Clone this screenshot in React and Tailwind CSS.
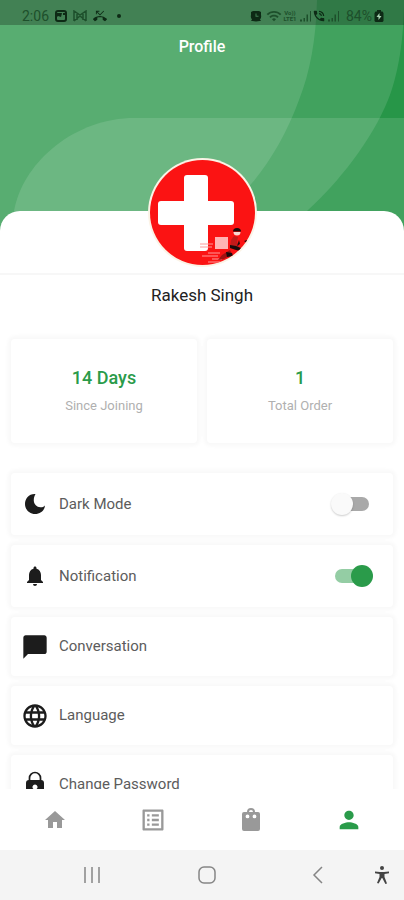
import React, { useState } from "react";
import {
  MdChatBubble,
  MdHome,
  MdLanguage,
  MdListAlt,
  MdNotifications,
  MdPerson,
  MdPhoneInTalk,
  MdPhoneMissed,
  MdWifi,
} from "react-icons/md";

const stats = [
  { value: "14 Days", label: "Since Joining" },
  { value: "1", label: "Total Order" },
];

const MoonIcon = ({ className }) => (
  <svg viewBox="0 0 24 24" fill="currentColor" className={className}>
    <path d="M11.500 2C5.800 2 2 6.600 2 12s4.400 10 10 10 9.600-3.600 10-8.600c-1.200 1.300-2.900 2-4.700 1.900-3.500-.2-6.300-3-6.500-6.500C10.700 6.300 11.300 4 12.500 2Z" />
  </svg>
);

const LockIcon = ({ className }) => (
  <svg viewBox="0 0 24 28" fill="currentColor" className={className}>
    <path d="M6.500 10V7a5.500 5.500 0 0 1 11 0v3" fill="none" stroke="currentColor" strokeWidth="1.700" />
    <path
      fillRule="evenodd"
      d="M6 9h12a3 3 0 0 1 3 3v10a3 3 0 0 1-3 3H6a3 3 0 0 1-3-3V12a3 3 0 0 1 3-3Zm6 4.500a2.500 2.500 0 0 0-1.500 4.500L10 21h4l-.5-3a2.500 2.500 0 0 0-1.500-4.500Z"
    />
  </svg>
);

const BagIcon = ({ className }) => (
  <svg viewBox="0 0 22 26" fill="currentColor" className={className}>
    <path
      fillRule="evenodd"
      d="M4 5h3a4 4 0 0 1 8 0h3a2 2 0 0 1 2 2v15a2 2 0 0 1-2 2H4a2 2 0 0 1-2-2V7a2 2 0 0 1 2-2Zm5 0h4a2 2 0 0 0-4 0ZM7.500 7.500a1.900 1.900 0 1 0 .01 3.800A1.900 1.900 0 0 0 7.500 7.500Zm7 0a1.900 1.900 0 1 0 .01 3.800A1.900 1.900 0 0 0 14.500 7.500Z"
    />
  </svg>
);

const AlarmIcon = ({ className }) => (
  <svg viewBox="0 0 12 12" fill="currentColor" className={className}>
    <path fillRule="evenodd" d="M3 1h6l2 1v3a5 5 0 0 1-1 4.500L11 11H9.500L6 11.500 2.500 11H1l1-1.500A5 5 0 0 1 1 5V2ZM5.500 3.500v3.300H8.500v-1h-2V3.500Z" />
  </svg>
);

const BatteryIcon = ({ className }) => (
  <svg viewBox="0 0 10 12" fill="currentColor" className={className}>
    <path d="M3 0h4v1.500h1.500L9.500 3v8l-1 1h-7l-1-1V3l1-1.500H3Z" />
    <path d="M5.500 3 2.500 7h2v3l3-4h-2Z" fill="#a9d3b4" />
  </svg>
);

const links = [
  { label: "Conversation", Icon: MdChatBubble },
  { label: "Language", Icon: MdLanguage },
  { label: "Change Password", Icon: LockIcon, iconClass: "h-7 w-6" },
];

const Signal = () => (
  <svg viewBox="0 0 12 12" fill="currentColor" className="size-3">
    <path d="M0 9.500h2v2H0zM3.500 8h1.500v3.500H3.500zM6.500 4.500H8v7H6.500zM10 1h1v10.500h-1z" />
  </svg>
);

// =========================================
// STATUS BAR
// =========================================
const StatusBar = () => (
  <div className="relative flex h-[25px] items-center justify-between bg-black/25 pt-1.5 pr-5 pl-[22px] text-[#1d4f2b]">
    <div className="flex items-center gap-1.5 text-sm">
      <span>2:06</span>
      <svg viewBox="0 0 12 12" className="size-3 text-[#0d2a15]">
        <rect x="1" y="1" width="10" height="10" rx="2" fill="none" stroke="currentColor" strokeWidth="2" />
        <path d="M1 3h6l-1 4-3-1-2 2zM8 3h2v2H8z" fill="currentColor" />
      </svg>
      <svg viewBox="0 0 14 12" className="h-3 w-3.5" fill="none" stroke="currentColor" strokeWidth="1.500">
        <path d="M1 11V1l6 4 6-4v10M1 11l6-5 6 5M4 4v6M10 4v6" />
      </svg>
      <MdPhoneMissed className="size-3.5 text-[#0d2a15]" />
      <span className="ml-1 size-1 rounded-full bg-[#0d2a15]" />
    </div>
    <div className="flex items-center text-sm">
      <AlarmIcon className="mr-1 size-3 text-[#0d2a15]" />
      <MdWifi className="size-4" />
      <span className="mr-0.5 flex w-4 flex-col items-center text-[6px] leading-[6px] font-bold">
        <span>Vo))</span>
        <span>LTE1</span>
      </span>
      <Signal />
      <MdPhoneInTalk className="mr-0.5 size-3.5 text-[#0d2a15]" />
      <Signal />
      <span className="ml-1.5">84%</span>
      <BatteryIcon className="ml-0.5 h-3 w-2.5 text-[#0d2a15]" />
    </div>
  </div>
);

// =========================================
// AVATAR
// =========================================
const Avatar = () => (
  <svg viewBox="0 0 109 109" className="size-[109px]" role="img" aria-label="Rakesh Singh">
    <defs>
      <clipPath id="avatar">
        <circle cx="54.500" cy="54.500" r="52.500" />
      </clipPath>
    </defs>
    <circle cx="54.500" cy="54.500" r="54.500" fill="#fbf3e6" />
    <g clipPath="url(#avatar)">
      <rect width="109" height="109" fill="#fb1313" />
      <rect x="36" y="17" width="24" height="76" rx="3" fill="#fff" />
      <rect x="10" y="43" width="76" height="24" rx="3" fill="#fff" />
      <rect x="67" y="79" width="13" height="12" fill="#ffb3b3" />
      <path d="M52 86h13M52 89h12M60 95h12M54 98h16M64 101h10M60 104h12" stroke="#ff9a9a" />
      <path d="M83 82l3-4 4 1-1 5 2 4-5 3-4-2z" fill="#c21a1a" />
      <path d="M82 92l-8 5-4 5 6-1 8-5z" fill="#a31212" />
      <path d="M85.500 74h7a3.500 3.500 0 0 1-7 0z" fill="#f8d9d3" />
      <path d="M85 73.500q0-3.500 4-3.500t4 3.500zM82 87l6 1 5 2-1 3-4-1-6-2zM78 94l6 1 1 3-6 1zM96 83l3-1v3zM91 82l1 4-3 2zM84 99l4-2-2 4z" fill="#1b0b0b" />
    </g>
  </svg>
);

const Switch = ({ id, checked, onChange }) => (
  <span className="relative flex h-[22px] w-[42px] items-center">
    <input
      id={id}
      type="checkbox"
      role="switch"
      checked={checked}
      onChange={(e) => onChange(e.target.checked)}
      className="peer mx-auto h-3.5 w-[34px] cursor-pointer appearance-none rounded-full bg-[#a9a9a9] checked:bg-[#94cda4]"
    />
    <span className="pointer-events-none absolute left-0 size-[22px] rounded-full bg-[#fafafa] shadow-[0_1px_2px_rgba(0,0,0,0.2)] peer-checked:right-0 peer-checked:left-auto peer-checked:bg-[#2a9b4a] peer-checked:shadow-none" />
  </span>
);

const ToggleRow = ({ id, label, Icon, checked, onChange }) => (
  <div className="flex h-[62px] shrink-0 items-center rounded-sm bg-white pr-5 pl-2.5 shadow-[0_0_4px_3px_#f8f8f8]">
    <span className="flex w-7 justify-center">
      <Icon className="size-6 text-[#1c1c1c]" />
    </span>
    <label htmlFor={id} className="ml-2.5 flex-1 text-[15px] text-[#5c5c5c]">
      {label}
    </label>
    <Switch id={id} checked={checked} onChange={onChange} />
  </div>
);

const LinkRow = ({ label, Icon, iconClass = "size-7" }) => (
  <button
    type="button"
    className="flex h-[59px] shrink-0 items-center rounded-sm bg-white px-2.5 text-[15px] text-[#5c5c5c] shadow-[0_0_4px_3px_#f8f8f8]"
  >
    <span className="flex w-7 justify-center text-[#1c1c1c]">
      <Icon className={iconClass} />
    </span>
    <span className="ml-2.5">{label}</span>
  </button>
);

export default function App() {
  const [darkMode, setDarkMode] = useState(false);
  const [notification, setNotification] = useState(true);

  return (
    <div className="flex h-screen flex-col overflow-hidden bg-white font-['Roboto',sans-serif]">
      {/* HEADER */}
      <header className="relative h-[231px] shrink-0 overflow-hidden bg-[#279648]">
        <svg
          viewBox="0 0 404 231"
          preserveAspectRatio="xMidYMin slice"
          className="absolute inset-0 size-full"
          fill="#fff"
          fillOpacity="0.12"
        >
          <path d="M0 0H404C404 40 398 75 388 100C372 140 338 183 307 211L284 231H0Z" />
          <path d="M0 0H317C316 40 310 72 299 100C287 133 270 162 252 183C236 202 220 217 200 231H0Z" />
          <path d="M404 118H129C70 121 22 165 14 211L12 231H404Z" />
        </svg>
        <StatusBar />
        <h1 className="relative mt-2.5 text-center text-base leading-6 font-medium text-white">Profile</h1>
      </header>

      <main className="relative -mt-5 flex min-h-0 flex-1 flex-col rounded-t-[20px] bg-white">
        <div className="-mt-[53px] flex shrink-0 justify-center border-b-2 border-[#f7f7f7] pb-1.5">
          <Avatar />
        </div>

        <div className="flex min-h-0 flex-1 flex-col overflow-hidden px-[11px]">
          <h2 className="mt-2 text-center text-[17px] leading-6 text-[#222]">Rakesh Singh</h2>

          <div className="mt-8 grid shrink-0 grid-cols-2 gap-2.5">
            {stats.map(({ value, label }) => (
              <div
                key={label}
                className="flex h-[104px] flex-col items-center justify-center gap-1.5 rounded-sm bg-white shadow-[0_0_4px_3px_#f8f8f8]"
              >
                <p className="text-lg leading-6 font-medium text-[#2a9b4a]">{value}</p>
                <p className="text-[13px] leading-5 text-[#b0b0b0]">{label}</p>
              </div>
            ))}
          </div>

          <div className="mt-[30px] flex flex-col gap-2.5">
            <ToggleRow id="dark-mode" label="Dark Mode" Icon={MoonIcon} checked={darkMode} onChange={setDarkMode} />
            <ToggleRow
              id="notification"
              label="Notification"
              Icon={MdNotifications}
              checked={notification}
              onChange={setNotification}
            />
            {links.map((item) => (
              <LinkRow key={item.label} {...item} />
            ))}
          </div>
        </div>
      </main>

      {/* APP TABS */}
      <nav className="grid h-[61px] shrink-0 grid-cols-4 items-center bg-white px-1.5 text-[#999]">
        <button type="button" aria-label="Home" className="flex justify-center">
          <MdHome className="size-6" />
        </button>
        <button type="button" aria-label="Orders" className="flex justify-center">
          <MdListAlt className="size-7" />
        </button>
        <button type="button" aria-label="Cart" className="flex justify-center">
          <BagIcon className="h-[26px] w-[22px]" />
        </button>
        <button type="button" aria-label="Profile" className="flex justify-center text-[#2a9b4a]">
          <MdPerson className="size-7" />
        </button>
      </nav>

      {/* SYSTEM BUTTONS */}
      <footer className="flex h-[50px] shrink-0 items-center justify-between bg-[#f4f4f4] pr-3 pl-[83px] text-[#858585]">
        <button type="button" aria-label="Recent apps">
          <svg viewBox="0 0 18 18" className="size-[18px]" stroke="currentColor" strokeWidth="1.500">
            <path d="M2 1v16M9 1v16M16 1v16" />
          </svg>
        </button>
        <button type="button" aria-label="Home screen">
          <svg viewBox="0 0 18 18" className="size-[18px]" fill="none" stroke="currentColor" strokeWidth="1.500">
            <rect x="1" y="1" width="16" height="16" rx="5" />
          </svg>
        </button>
        <div className="flex items-center gap-12">
          <button type="button" aria-label="Back">
            <svg viewBox="0 0 12 18" className="h-[18px] w-3" fill="none" stroke="currentColor" strokeWidth="1.500">
              <path d="M10 1L2 9l8 8" />
            </svg>
          </button>
          <button type="button" aria-label="Accessibility">
            <svg viewBox="0 0 20 20" className="size-5 text-[#444]" fill="currentColor">
              <circle cx="10" cy="3" r="2" />
              <path d="M3 6.500l5 .5h4l5-.5v1.700l-4.500.8v3l2.500 6.500-1.600.6L10.300 13h-.6l-3.100 5.600-1.600-.6L7.500 12V9L3 8.200z" />
            </svg>
          </button>
        </div>
      </footer>
    </div>
  );
}
